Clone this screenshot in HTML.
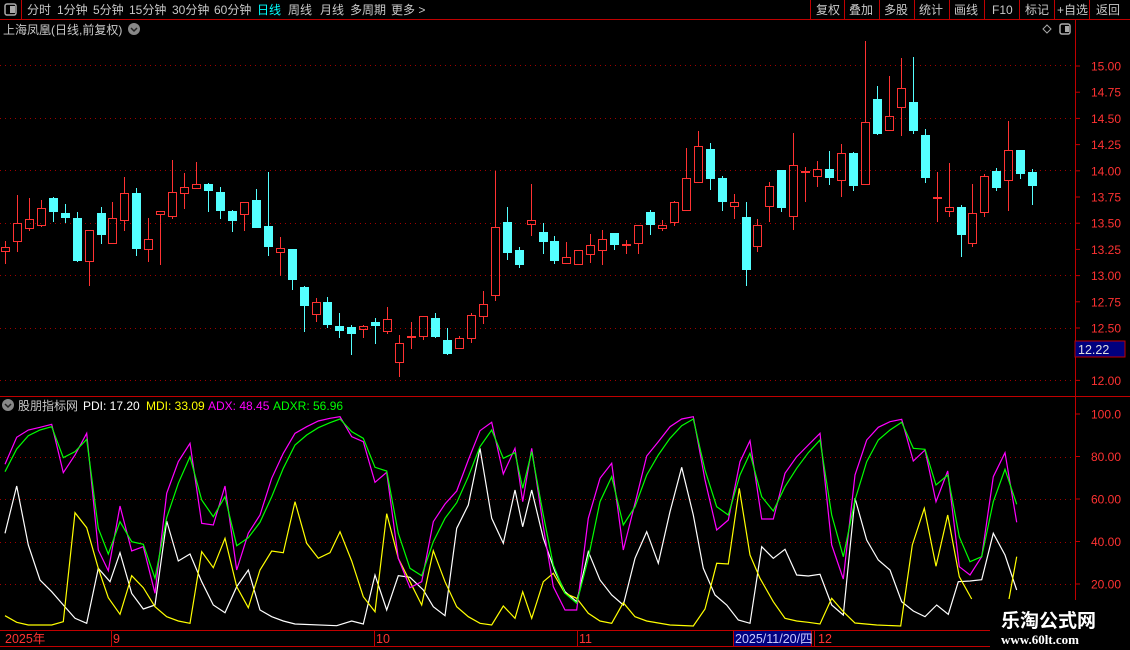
<!DOCTYPE html>
<html><head><meta charset="utf-8">
<style>
html,body{margin:0;padding:0;background:#000;width:1130px;height:650px;overflow:hidden;font-family:"Liberation Sans","Noto Sans CJK SC",sans-serif;}
svg{position:absolute;left:0;top:0}
</style></head>
<body>
<svg id="s" width="1130" height="650" xmlns="http://www.w3.org/2000/svg" font-family="Liberation Sans, Noto Sans CJK SC, sans-serif">
<rect width="1130" height="650" fill="#000"/>
<!-- toolbar -->
<line x1="0" y1="19.5" x2="1130" y2="19.5" stroke="#c00000"/>
<line x1="21.5" y1="0" x2="21.5" y2="19" stroke="#c00000"/>
<rect x="5" y="4" width="11" height="11" rx="2" fill="none" stroke="#aaa" stroke-width="1.5"/>
<rect x="10" y="6" width="5" height="7" fill="#aaa"/>
<g font-size="12" fill="#c8c8c8">
<text x="27" y="14">分时</text><text x="57" y="14">1分钟</text><text x="93" y="14">5分钟</text><text x="129" y="14">15分钟</text><text x="172" y="14">30分钟</text><text x="214" y="14">60分钟</text>
<text x="257" y="14" fill="#00ffff">日线</text><text x="288" y="14">周线</text><text x="320" y="14">月线</text><text x="350" y="14">多周期</text><text x="391" y="14">更多 &gt;</text>
<text x="816" y="14">复权</text><text x="849" y="14">叠加</text><text x="884" y="14">多股</text><text x="919" y="14">统计</text><text x="954" y="14">画线</text><text x="992" y="14">F10</text><text x="1025" y="14">标记</text><text x="1057" y="14">+自选</text><text x="1096" y="14">返回</text>
</g>
<g stroke="#c00000"><line x1="810.5" y1="0" x2="810.5" y2="19"/><line x1="844.5" y1="0" x2="844.5" y2="19"/><line x1="879.5" y1="0" x2="879.5" y2="19"/><line x1="914.5" y1="0" x2="914.5" y2="19"/><line x1="949.5" y1="0" x2="949.5" y2="19"/><line x1="984.5" y1="0" x2="984.5" y2="19"/><line x1="1019.5" y1="0" x2="1019.5" y2="19"/><line x1="1054.5" y1="0" x2="1054.5" y2="19"/><line x1="1089.5" y1="0" x2="1089.5" y2="19"/></g>
<text x="3" y="34" font-size="12" fill="#c8c8c8">上海凤凰(日线,前复权)</text>
<circle cx="134" cy="29" r="6" fill="#888"/><path d="M131 28l3 3 3-3" stroke="#222" stroke-width="1.5" fill="none"/>
<path d="M1047 25l4 4-4 4-4-4z" fill="none" stroke="#aaa"/>
<rect x="1060" y="24" width="10" height="10" rx="2" fill="none" stroke="#aaa" stroke-width="1.5"/><rect x="1065" y="26" width="4" height="6" fill="#aaa"/>
<!-- axes -->
<line x1="1075.5" y1="20" x2="1075.5" y2="630" stroke="#c00000"/>
<line x1="0" y1="396.5" x2="1130" y2="396.5" stroke="#c00000"/>
<line x1="0" y1="630.5" x2="1000" y2="630.5" stroke="#c00000"/>
<line x1="0" y1="646.5" x2="1000" y2="646.5" stroke="#c00000"/>
<g id="grid" stroke="#a00000" stroke-dasharray="1,4"></g>
<g id="ax" font-size="12" fill="#ff3232"></g>
<rect x="1075" y="341" width="50" height="16" fill="#00007f" stroke="#c00000"/>
<text x="1078" y="354" font-size="12.5" fill="#e0e0e0">12.22</text>
<g id="c"></g>
<g id="ind" fill="none" stroke-width="1.2"></g>
<!-- indicator title -->
<circle cx="8" cy="405" r="6" fill="#888"/><path d="M5 404l3 3 3-3" stroke="#222" stroke-width="1.5" fill="none"/>
<g font-size="12">
<text x="18" y="410" fill="#c8c8c8">股朋指标网</text>
<text x="83" y="410" fill="#fff">PDI: 17.20</text>
<text x="146" y="410" fill="#ffff00">MDI: 33.09</text>
<text x="208" y="410" fill="#ff00ff">ADX: 48.45</text>
<text x="273" y="410" fill="#00ff00">ADXR: 56.96</text>
</g>
<!-- date bar -->
<g stroke="#c00000"><line x1="111.5" y1="630" x2="111.5" y2="646"/><line x1="374.5" y1="630" x2="374.5" y2="646"/><line x1="577.5" y1="630" x2="577.5" y2="646"/><line x1="814.5" y1="630" x2="814.5" y2="646"/></g>
<g font-size="12.5" fill="#ff3232"><text x="5" y="643">2025年</text><text x="113" y="643">9</text><text x="376" y="643">10</text><text x="579" y="643">11</text><text x="818" y="643">12</text></g>
<rect x="733.5" y="630.5" width="78" height="16" fill="#00007f" stroke="#c00000"/>
<text x="735" y="643" font-size="12.5" fill="#c8c8ff">2025/11/20/四</text>
<rect x="990" y="600" width="140" height="50" fill="#000"/>
<text x="1001" y="627" font-size="19" font-weight="bold" fill="#fff" font-family="Noto Sans CJK SC, sans-serif">乐淘公式网</text>
<text x="1001" y="644" font-size="13" font-weight="bold" fill="#fff" font-family="Liberation Serif, serif">www.60lt.com</text>
</svg>
<script>
var NS="http://www.w3.org/2000/svg";
function el(p,t,a){var e=document.createElementNS(NS,t);for(var k in a)e.setAttribute(k,a[k]);p.appendChild(e);return e;}
var g=document.getElementById('grid');
[65,118,170,223,275,328,380,457,499,542,584].forEach(function(y){el(g,'line',{x1:0,y1:y+.5,x2:1075,y2:y+.5});});
var ax=document.getElementById('ax');
var pl=['15.00','14.75','14.50','14.25','14.00','13.75','13.50','13.25','13.00','12.75','12.50','12.25','12.00'];
pl.forEach(function(t,i){var y=66+i*26.2;if(t=='12.25')return;el(ax,'line',{x1:1075,y1:y,x2:1080,y2:y,stroke:'#c00000'});var x=el(ax,'text',{x:1091,y:y+4.5});x.textContent=t;});
['100.0','80.00','60.00','40.00','20.00'].forEach(function(t,i){var y=414+i*42.5;el(ax,'line',{x1:1075,y1:y,x2:1080,y2:y,stroke:'#c00000'});var x=el(ax,'text',{x:1091,y:y+4.5});x.textContent=t;});
var C=[[5,247,252,241,264,1],[17,223,242,195,252,1],[29,219,229,198,231,1],[41,208,226,200,227,1],[53,198,212,197,222,0],[65,213,218,204,223,0],[77,218,261,212,262,0],[89,230,262,230,286,1],[101,213,235,207,244,0],[112,218,244,202,244,1],[124,193,221,177,231,1],[136,193,249,188,256,0],[148,239,250,218,262,1],[160,211,215,211,265,1],[172,192,217,160,219,1],[184,187,194,173,209,1],[196,184,189,162,189,1],[208,184,191,183,212,0],[220,192,211,187,219,0],[232,211,221,210,232,0],[244,202,215,202,231,1],[256,200,228,189,228,0],[268,226,247,172,256,0],[280,248,253,237,276,1],[292,249,280,249,290,0],
[304,287,306,286,332,0],[316,302,315,298,322,1],[327,302,325,297,328,0],[339,326,331,313,338,0],[351,327,334,325,355,0],[363,326,330,325,338,1],[375,322,326,318,344,0],[387,319,332,307,334,1],[399,343,363,335,377,1],[411,336,337,322,349,1],[423,316,337,316,340,1],[435,318,337,313,338,0],[447,340,354,328,355,0],[459,338,349,336,349,1],[471,315,339,313,343,1],[483,304,317,291,324,1],[495,227,296,171,301,1],[507,222,253,207,260,0],[519,250,265,247,268,0],[531,220,225,184,236,1],[543,232,242,223,254,0],[554,241,261,236,264,0],[566,257,264,242,264,1],[578,250,265,250,265,1],[590,245,255,234,263,1],[602,239,251,230,265,1],[614,233,245,233,250,0],[626,244,246,240,254,1],[638,225,244,225,254,1],[650,212,225,210,235,0],[662,225,229,220,231,1],[674,202,223,201,226,1],[686,178,211,148,211,1],
[698,146,183,131,183,1],[710,149,179,143,190,0],[722,178,202,176,211,0],[734,202,207,194,219,1],[746,217,270,202,286,0],[757,225,247,219,252,1],[769,186,207,182,222,1],[781,170,208,170,212,0],[793,165,217,133,230,1],[805,171,173,167,202,1],[817,169,177,161,187,1],[829,169,178,151,185,0],[841,153,181,144,197,1],[853,153,186,152,191,0],[865,122,185,41,185,1],[877,99,134,86,135,0],[889,116,131,76,131,1],[901,88,108,58,136,1],[913,102,131,57,134,0],[925,135,178,129,183,0],[937,197,199,172,222,1],[949,207,212,163,217,1],[961,207,235,205,257,0],[972,213,244,184,247,1],[984,176,213,174,217,1],[996,171,188,168,191,0],[1008,150,181,121,211,1],[1020,150,174,150,179,0],[1032,172,186,169,205,0]];
var cg=document.getElementById('c');
C.forEach(function(c){var x=c[0],red=c[5],col=red?'#ff3232':'#54ffff';
 if(red){el(cg,'line',{x1:x+.5,y1:c[3],x2:x+.5,y2:c[1],stroke:col});el(cg,'line',{x1:x+.5,y1:c[2],x2:x+.5,y2:c[4],stroke:col});
  var h=c[2]-c[1];if(h<3){el(cg,'rect',{x:x-4,y:c[1],width:9,height:2,fill:col});}
  else el(cg,'rect',{x:x-3.5,y:c[1]+.5,width:8,height:h-1,fill:'none',stroke:col});}
 else{el(cg,'line',{x1:x+.5,y1:c[3],x2:x+.5,y2:c[4],stroke:col});el(cg,'rect',{x:x-4,y:c[1],width:9,height:Math.max(2,c[2]-c[1]),fill:col});}
});
function P(a,off){var s=[];for(var i=0;i<a.length;i+=2)s.push((off+a[i]/3).toFixed(1)+','+(405+a[i+1]/3).toFixed(1));return s.join(' ');}
var ig=document.getElementById('ind');
function line(a,b,col){el(ig,'polyline',{points:P(a,0)+' '+P(b,530),stroke:col});}
line([15,385,50,243,85,420,120,525,155,560,190,600,225,640,260,655,295,490,330,530,360,443,395,565,430,612,465,600,500,348,535,468,570,447,605,530,640,600,675,623,710,545,745,495,780,615,815,635,850,648,885,657,1010,662,1055,648,1090,657,1125,510,1160,615,1195,512,1230,517,1270,555,1300,605,1335,632,1370,370,1405,300,1440,130,1475,340,1510,415,1545,255,1568,365],
[5,255,40,400,75,500,105,560,140,590,175,440,210,525,245,570,280,600,315,460,350,380,385,475,420,320,455,187,490,330,520,490,555,570,590,600,625,645,660,655,695,425,730,460,765,433,800,510,835,513,870,508,905,600,940,630,975,280,1010,405,1045,465,1080,495,1115,590,1150,618,1185,635,1220,600,1255,628,1285,530,1320,528,1355,524,1390,385,1425,450,1460,555],'#ffffff');
line([15,632,50,652,85,660,155,660,190,650,225,323,260,368,295,490,325,578,360,628,395,512,430,548,465,605,500,635,535,648,570,655,605,440,640,488,675,400,710,545,745,608,780,495,815,438,850,443,885,290,920,415,955,460,990,443,1020,380,1055,468,1090,575,1125,620,1160,326,1195,460,1230,530,1265,600,1300,437,1335,530,1370,605,1405,635,1440,655,1475,660,1510,603,1545,640,1568,560],
[5,640,40,530,70,505,105,565,140,580,175,625,210,648,245,655,280,593,315,635,350,648,420,660,490,663,525,612,560,475,595,477,628,250,660,450,690,520,730,590,765,640,800,648,835,652,870,657,905,580,940,620,975,654,1040,660,1112,663,1147,420,1183,310,1218,484,1253,330,1288,515,1325,582],'#ffff00');
el(ig,'polyline',{points:P([1437,582,1460,455],530),stroke:'#ffff00'});
line([15,178,50,97,85,75,120,67,155,58,190,203,225,150,260,85,295,435,325,497,360,303,395,438,430,425,465,565,500,265,535,170,570,115,605,355,640,360,675,243,710,495,745,385,780,330,815,220,850,145,885,85,920,65,955,48,990,40,1020,35,1055,95,1090,110,1125,232,1160,202,1195,460,1230,548,1265,530,1300,350,1335,297,1370,258,1405,165,1440,77,1475,52,1510,207,1545,130,1568,290],
[5,130,40,365,70,545,105,615,140,615,175,340,210,220,245,175,280,435,315,295,350,153,385,110,420,65,455,42,490,35,525,225,560,375,595,345,630,170,660,107,695,342,730,342,765,205,800,155,835,120,870,85,905,420,940,522,975,210,1010,105,1045,67,1080,50,1115,43,1150,168,1185,135,1218,290,1253,198,1288,485,1320,510,1355,455,1390,215,1425,143,1460,352],'#ff00ff');
line([15,200,50,132,85,92,120,75,155,65,190,158,225,140,260,103,295,370,325,447,360,350,395,410,430,418,465,520,500,338,535,235,570,155,605,285,640,335,675,275,710,422,745,398,780,352,815,275,850,190,885,120,920,90,955,68,990,53,1020,42,1055,80,1090,100,1125,187,1160,198,1195,385,1230,490,1265,512,1300,410,1335,340,1370,293,1405,215,1440,125,1475,75,1510,160,1545,143,1568,250],
[5,140,40,330,70,480,105,565,140,595,175,460,210,290,245,215,280,360,315,305,350,210,385,150,420,100,455,62,490,42,525,195,560,305,595,330,630,210,660,145,695,275,730,318,765,245,800,190,835,143,870,105,905,330,940,455,975,285,1010,170,1045,105,1080,75,1115,52,1150,130,1185,133,1218,240,1253,210,1288,395,1320,470,1355,455,1390,290,1425,193,1460,298],'#00ff00');
</script>
</body></html>
